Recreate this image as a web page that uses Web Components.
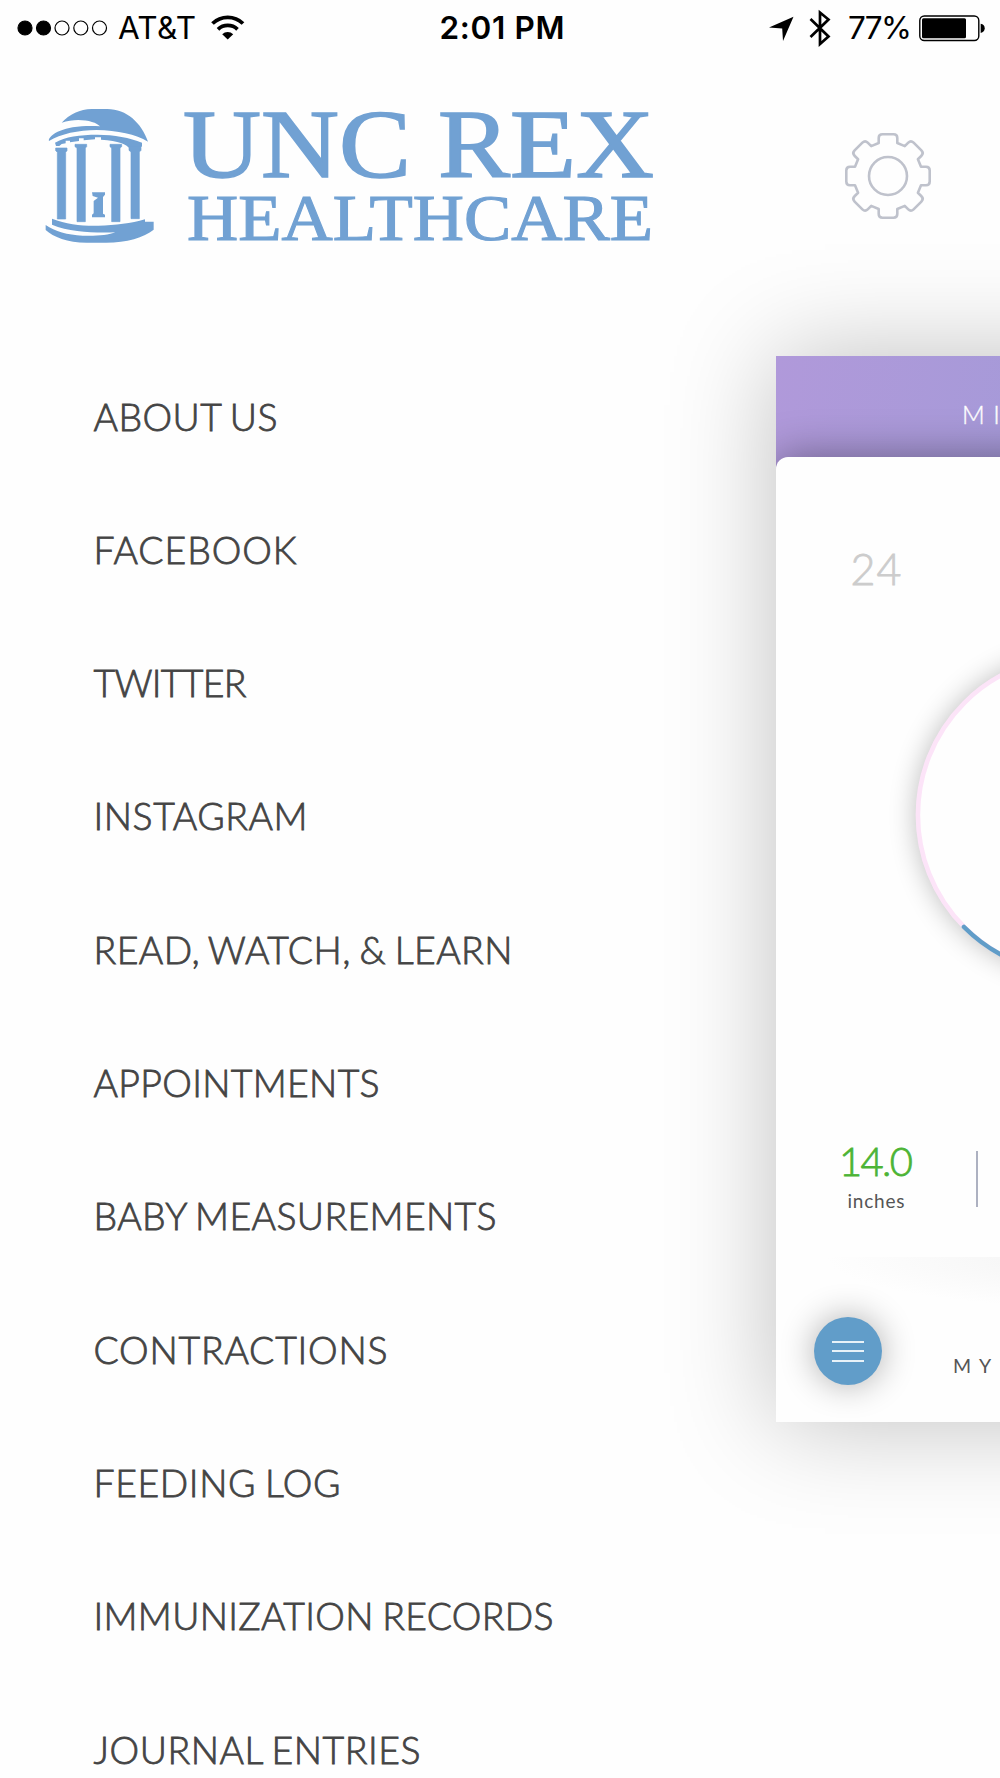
<!DOCTYPE html>
<html lang="en">
<head>
<meta charset="UTF-8">
<title>UNC REX Healthcare</title>
<style>
  body {
    margin: 0;
    background: #fefefe;
    overflow: hidden;
  }
</style>
</head>
<body>
<app-screen>
  <status-bar slot="status"></status-bar>
  <brand-header slot="header"></brand-header>
  <side-menu slot="menu">
    <menu-entry width="184">ABOUT US</menu-entry>
    <menu-entry width="203">FACEBOOK</menu-entry>
    <menu-entry width="153">TWITTER</menu-entry>
    <menu-entry width="214">INSTAGRAM</menu-entry>
    <menu-entry width="419">READ, WATCH, &amp; LEARN</menu-entry>
    <menu-entry width="286">APPOINTMENTS</menu-entry>
    <menu-entry width="403">BABY MEASUREMENTS</menu-entry>
    <menu-entry width="294">CONTRACTIONS</menu-entry>
    <menu-entry width="247">FEEDING LOG</menu-entry>
    <menu-entry width="460">IMMUNIZATION RECORDS</menu-entry>
    <menu-entry width="327">JOURNAL ENTRIES</menu-entry>
  </side-menu>
  <preview-card slot="preview"></preview-card>
</app-screen>

<script>
class BaseElement extends HTMLElement {
  constructor() {
    super();
    this.attachShadow({ mode: 'open' });
    this.shadowRoot.innerHTML = this.render();
  }
}

class AppScreen extends BaseElement {
  render() {
    return `
      <style>
        :host {
          display: flex;
          flex-direction: column;
          width: 1000px;
          height: 1778px;
          overflow: hidden;
          background: #fefefe;
        }
        .content {
          display: flex;
          align-items: flex-start;
        }
      </style>
      <slot name="status"></slot>
      <slot name="header"></slot>
      <div class="content">
        <slot name="menu"></slot>
        <slot name="preview"></slot>
      </div>
    `;
  }
}

class StatusBar extends BaseElement {
  render() {
    return `
      <style>
        :host {
          display: grid;
          grid-template-columns: 1fr auto 1fr;
          align-items: center;
          flex: none;
          height: 54px;
          padding: 0 15px 0 17px;
          box-sizing: border-box;
          font: 400 31.5px/55px Inter, sans-serif;
          color: #000;
        }
        .left, .right {
          display: flex;
          align-items: center;
          height: 54px;
        }
        .right { justify-content: flex-end; }
        .time {
          font-weight: 600;
          padding-left: 2px;
        }
        svg { display: block; flex: none; }
        .carrier { margin-left: 10px; }
        .wifi { margin-left: 15px; }
        .bt { margin: 0 17px 0 15px; }
        .battery { margin-left: 7px; }
      </style>
      <div class="left">
        <svg width="91" height="54" viewBox="0 0 91 54">
          <g stroke="#000" stroke-width="1.2">
            <circle cx="8" cy="27" r="7"/>
            <circle cx="26.5" cy="27" r="7"/>
            <circle cx="45" cy="27" r="7" fill="none"/>
            <circle cx="63.8" cy="27" r="7" fill="none"/>
            <circle cx="82.5" cy="27" r="7" fill="none"/>
          </g>
        </svg>
        <fit-text class="carrier" width="78">AT&amp;T</fit-text>
        <svg class="wifi" width="34" height="54" viewBox="0 0 34 54">
          <g fill="none" stroke="#000" stroke-width="3.8">
            <path d="M1.5 22.5a22 22 0 0 1 30.5 0"/>
            <path d="M7 28.3a14.3 14.3 0 0 1 19.5 0"/>
          </g>
          <path d="M11.2 33.2a8 8 0 0 1 11 0L16.7 38.6z"/>
        </svg>
      </div>
      <fit-text class="time" width="125">2:01 PM</fit-text>
      <div class="right">
        <svg width="25" height="54" viewBox="0 0 25 54">
          <path d="M24.5 15.8L14 40l-.8-12.6L0 26.5z"/>
        </svg>
        <svg class="bt" width="22" height="54" viewBox="0 0 22 54">
          <path d="M1.5 18L19.5 35.5 11 43V11.5l8.5 7L1.5 36" fill="none" stroke="#000" stroke-width="2.7"/>
        </svg>
        <fit-text width="64">77%</fit-text>
        <svg class="battery" width="66" height="54" viewBox="0 0 66 54">
          <rect x=".8" y="15" width="59" height="24.5" rx="4.5" fill="#fff" stroke="#000" stroke-width="1.4"/>
          <rect x="3" y="17.3" width="44" height="20" rx="1.5"/>
          <path d="M61.7 22.8q4 .8 4 4.5t-4 4.7z"/>
        </svg>
      </div>
    `;
  }
}

class BrandHeader extends BaseElement {
  render() {
    // one tooth of the gear, repeated every 45 degrees
    const tooth = [[-9.3, -33], [-9.3, -38], [-9.3, -41.7], [-5.5, -41.7], [5.5, -41.7], [9.3, -41.7], [9.3, -38], [9.3, -33]];
    let gear = '';
    for (let i = 0; i < 8; i++) {
      const a = i * Math.PI / 4;
      const p = tooth.map(([x, y]) =>
        `${(x * Math.cos(a) - y * Math.sin(a)).toFixed(2)} ${(x * Math.sin(a) + y * Math.cos(a)).toFixed(2)}`);
      gear += `${i ? 'L' : 'M'}${p[0]}L${p[1]}Q${p[2]} ${p[3]}L${p[4]}Q${p[5]} ${p[6]}L${p[7]}`;
    }

    return `
      <style>
        :host {
          display: flex;
          align-items: flex-start;
          flex: none;
          height: 246px;
          padding: 41px 0 0 30px;
          box-sizing: border-box;
        }
        svg {
          display: block;
          flex: none;
          overflow: visible;
        }
        .gear { margin: 33px 0 0 170px; }
        text {
          font-family: "Liberation Serif", serif;
          fill: #71a1d3;
          stroke: #71a1d3;
        }
      </style>
      <svg width="140" height="160" viewBox="0 0 420 480" fill="#71a1d3">
        <path d="M95 83C118 58 150 42 185 42H232C290 42 335 84 354 140C318 118 262 106 200 105C145 106 92 116 57 138C55 134 58 129 64 123C78 111 100 102 128 97C158 92 188 92 210 94C198 78 142 66 95 83z"/>
        <path d="M75 143C105 125 150 119 202 119C253 119 300 128 336 143V154L331 160V168H298V160C290 148 267 138 213 134V127H195V133L161 136V130H147V138L120 142V137H107V145L95 147L88 153H78z"/>
        <g stroke="#71a1d3" stroke-width="2" stroke-linejoin="round">
          <path d="M77 159H111V167L107 172V372H82V172L77 167z"/>
          <path d="M135 148H170V155L166 159V380H141V159L135 155z"/>
          <path d="M240 148H275V155L270 159V380H245V159L240 155z"/>
          <path d="M297 157H333V166L328 171V371H303V171L297 166z"/>
        </g>
        <path d="M186 292H225V299L219 306V356L225 359V367H186V359L191 355V318L204 308L188 303z"/>
        <path d="M66 371C110 388 155 393 205 392C257 391 303 385 345 373V380H371V404C342 427 290 443 228 443H170C112 443 70 426 47 405V390C75 409 112 420 158 422C190 424 236 421 256 412C196 414 122 412 66 389z"/>
      </svg>
      <svg width="505" height="160" viewBox="0 0 505 160">
        <text x="13" y="82" font-size="98" stroke-width="1.6" textLength="471" lengthAdjust="spacingAndGlyphs">UNC REX</text>
        <text x="17" y="145" font-size="66" stroke-width="1.1" textLength="466" lengthAdjust="spacingAndGlyphs">HEALTHCARE</text>
      </svg>
      <svg class="gear" width="90" height="90" viewBox="-43 -48 90 90" fill="none" stroke="#bfc2cc" stroke-width="2.6" stroke-linejoin="round">
        <path d="${gear}z"/>
        <circle r="19"/>
      </svg>
    `;
  }
}

class SideMenu extends BaseElement {
  render() {
    return `
      <style>
        :host {
          display: flex;
          flex-direction: column;
          flex: none;
          width: 776px;
          padding: 49.6px 0 0 93.5px;
          box-sizing: border-box;
        }
      </style>
      <slot></slot>
    `;
  }
}

class MenuEntry extends BaseElement {
  render() {
    return `
      <style>
        :host {
          display: block;
          height: 133.3px;
          font: 300 37.4px/133.3px Lato, sans-serif;
          -webkit-text-stroke: 0.8px #444;
          word-spacing: -2px;
          color: #444;
        }
      </style>
      <fit-text width="${this.getAttribute('width')}"><slot></slot></fit-text>
    `;
  }
}

class PreviewCard extends BaseElement {
  render() {
    return `
      <style>
        :host {
          display: flex;
          flex-direction: column;
          flex: none;
          width: 600px;
          height: 1066px;
          margin-top: 56px;
          background: #fefefe;
          box-shadow: 0 0 98px rgba(0, 0, 0, 0.25);
          font-family: Lato, sans-serif;
          overflow: hidden;
        }
        .bar {
          flex: none;
          height: 101px;
          margin-bottom: -12px;
          padding: 0 0 12px 186px;
          background: linear-gradient(100deg, #b099da, #a39ad8 55%);
          color: #fff;
          font: 300 25px/117px Lato, sans-serif;
          -webkit-text-stroke: 0.4px #fff;
          letter-spacing: 8.5px;
        }
        .sheet {
          flex: none;
          height: 800px;
          background: #fefefe;
          border-radius: 12px 12px 0 0;
          box-shadow: 0 0 44px rgba(0, 0, 0, 0.4);
          clip-path: inset(-60px 0 1px 0);
          display: flex;
          flex-direction: column;
        }
        .week {
          height: 150px;
          padding-left: 74.5px;
          font: 300 43px/223px Lato, sans-serif;
          -webkit-text-stroke: 0.8px #ccc;
          color: #ccc;
        }
        svg { display: block; flex: none; }
        .stats {
          display: flex;
          align-items: flex-start;
          padding-left: 55px;
        }
        .stat {
          width: 90px;
          text-align: center;
        }
        .value {
          font: 300 40px/44px Lato, sans-serif;
          -webkit-text-stroke: 0.8px #4cb435;
          color: #4cb435;
        }
        .unit {
          margin-top: 5px;
          font: 400 19px/26px Lato, sans-serif;
          color: #555;
        }
        .divider {
          width: 1.5px;
          height: 56px;
          margin: 12px 0 0 55px;
          background: #adb1c1;
        }
        .footer {
          flex: 1;
          display: flex;
          align-items: flex-start;
          padding: 60px 0 0 38px;
          background: radial-gradient(ellipse 300px 52px at 350px 0, #f2f2f2, #fefefe);
        }
        .fab {
          display: flex;
          flex-direction: column;
          align-items: center;
          justify-content: center;
          gap: 7.5px;
          width: 68px;
          height: 68px;
          border-radius: 50%;
          background: #619dc9;
          box-shadow: 0 0 34px rgba(0, 0, 0, 0.32);
        }
        .fab i {
          width: 32px;
          height: 2px;
          background: #e8f2f8;
        }
        .my {
          margin: 36px 0 0 71px;
          font: 400 19.5px/26px Lato, sans-serif;
          letter-spacing: 8px;
          color: #555;
        }
      </style>
      <div class="bar">MI</div>
      <div class="sheet">
        <div class="week"><fit-text width="51">24</fit-text></div>
        <svg width="600" height="532" viewBox="0 0 600 532">
          <defs>
            <filter id="soft" x="-30%" y="-30%" width="160%" height="160%">
              <feGaussianBlur stdDeviation="14"/>
            </filter>
          </defs>
          <circle cx="300.6" cy="208" r="160" fill="#000" opacity=".27" filter="url(#soft)"/>
          <circle cx="300.6" cy="208" r="158.7" fill="#fefefe" stroke="#fce4f8" stroke-width="4.6"/>
          <path d="M188 320A158.7 158.7 0 0 0 413 320" fill="none" stroke="#609dc8" stroke-width="4.6" stroke-linecap="round"/>
        </svg>
        <div class="stats">
          <div class="stat">
            <div class="value"><fit-text width="74">14.0</fit-text></div>
            <div class="unit"><fit-text width="57">inches</fit-text></div>
          </div>
          <div class="divider"></div>
        </div>
      </div>
      <div class="footer">
        <div class="fab"><i></i><i></i><i></i></div>
        <div class="my">MY</div>
      </div>
    `;
  }
}

// spreads its letters so that the text takes up the given width
class FitText extends BaseElement {
  render() {
    return `
      <style>
        :host {
          display: inline-block;
          white-space: nowrap;
        }
      </style>
      <span><slot></slot></span>
    `;
  }

  connectedCallback() {
    const span = this.shadowRoot.querySelector('span');
    const slot = this.querySelector('slot');
    const text = slot ? slot.assignedNodes().map(n => n.textContent).join('') : this.textContent;
    const width = Number(this.getAttribute('width'));
    const natural = span.getBoundingClientRect().width;
    const spacing = (width - natural) / (text.trim().length - 1);
    span.style.letterSpacing = spacing + 'px';
    span.style.marginRight = -spacing + 'px';
  }
}

customElements.define('app-screen', AppScreen);
customElements.define('status-bar', StatusBar);
customElements.define('brand-header', BrandHeader);
customElements.define('side-menu', SideMenu);
customElements.define('menu-entry', MenuEntry);
customElements.define('preview-card', PreviewCard);
customElements.define('fit-text', FitText);
</script>
</body>
</html>
